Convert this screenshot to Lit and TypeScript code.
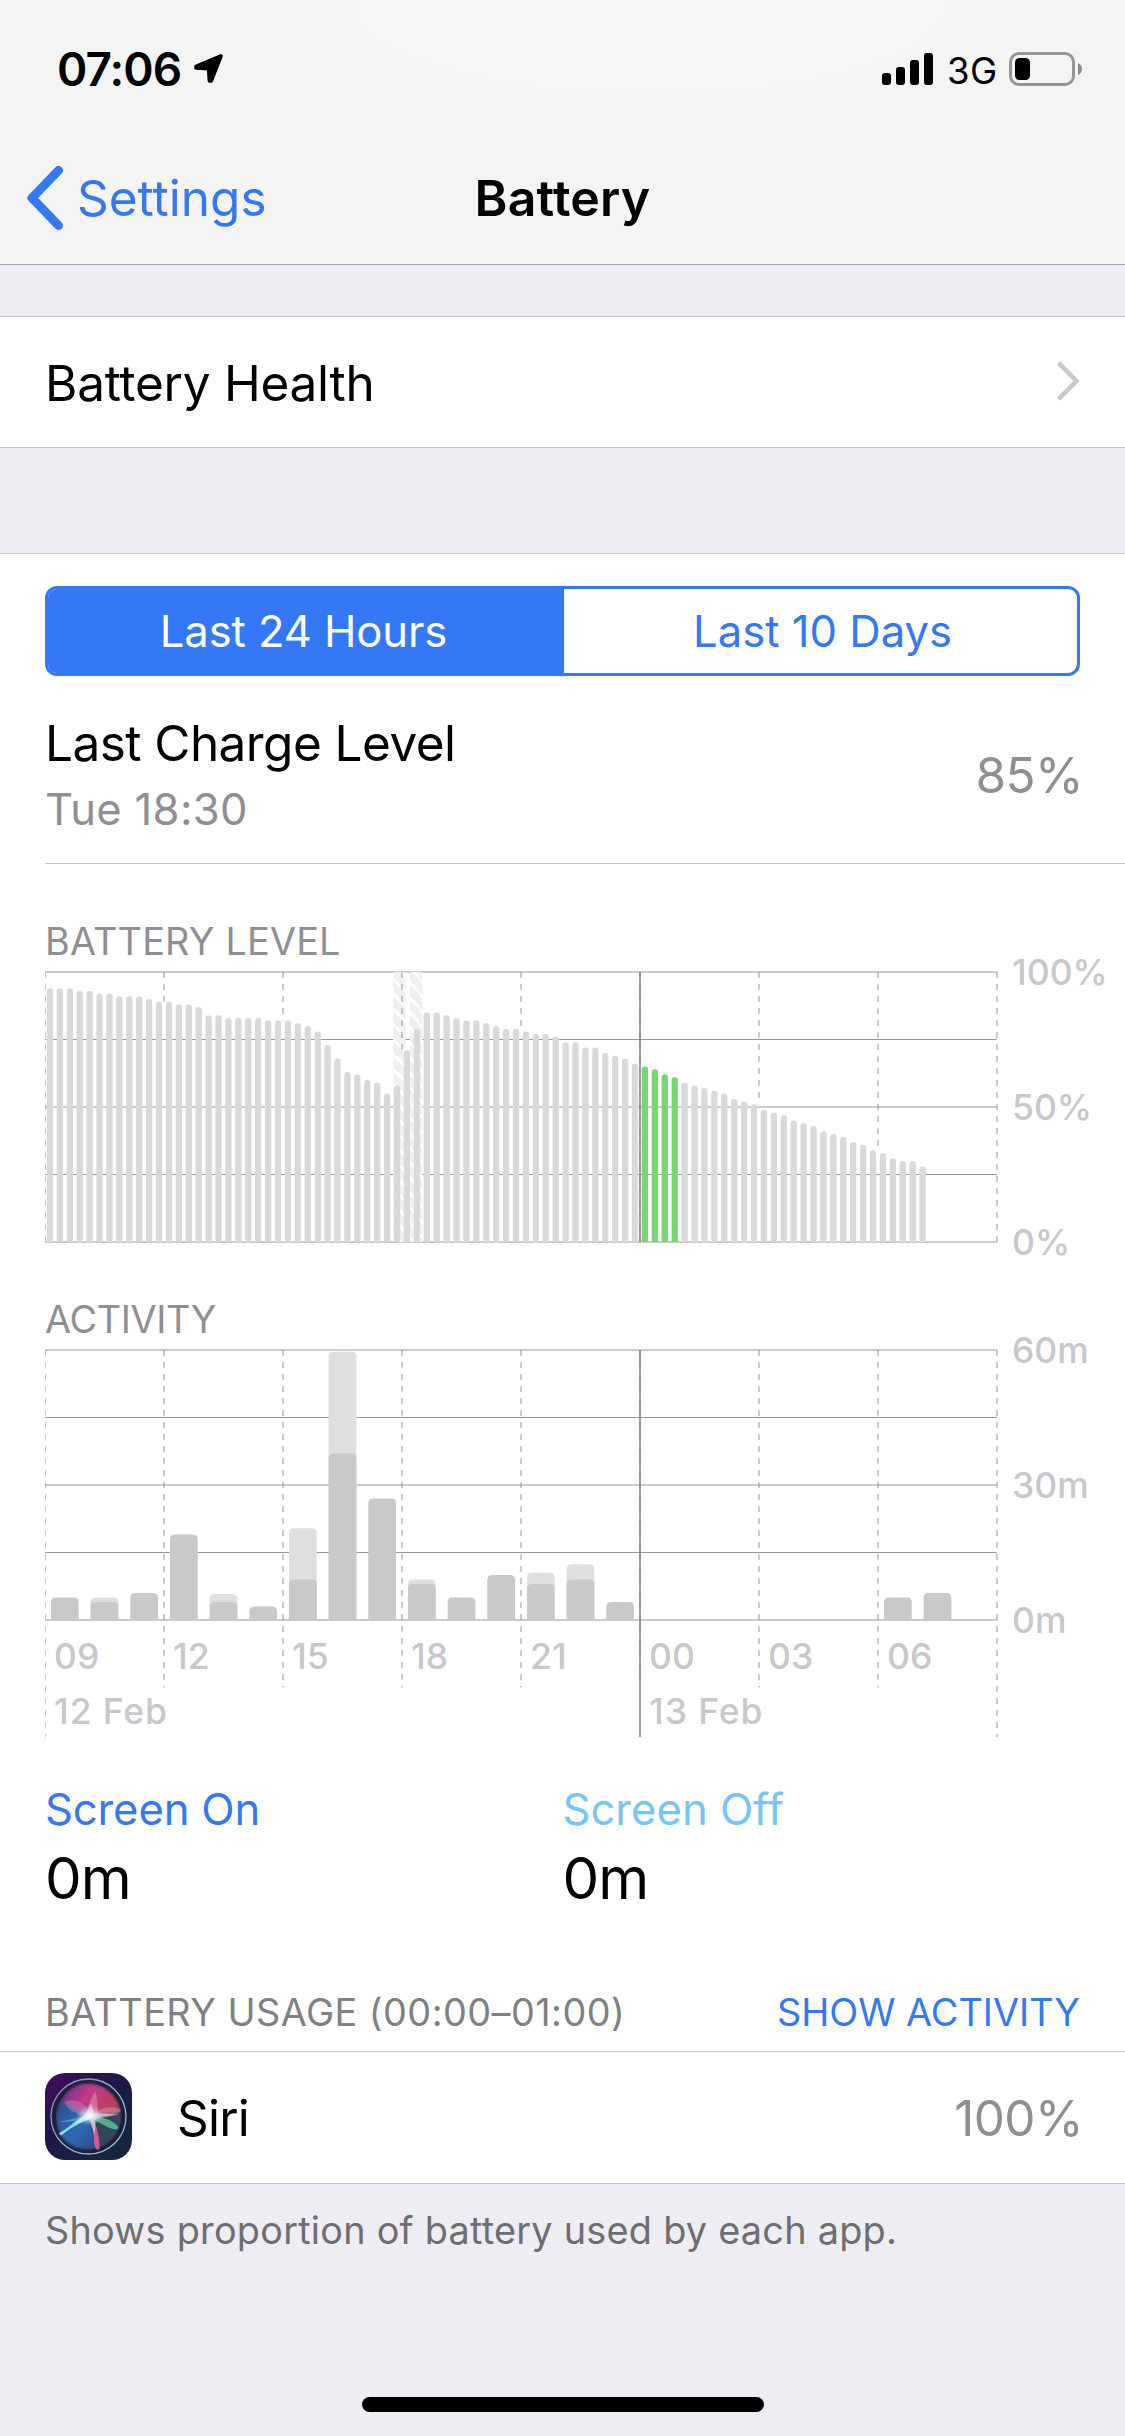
import { LitElement, html, css, svg } from "lit";
import { customElement } from "lit/decorators.js";

/** Battery percentage, one sample per quarter of an hour from 09:00. */
const LEVELS = [
  94, 94, 94, 93, 93, 92, 92, 91, 91, 91, 90, 89, 89, 88, 88, 87, 84, 84, 83, 83, 83, 83, 82, 82,
  82, 81, 80, 78, 73, 68, 63, 62, 60, 59, 55, 58, 71, 79, 85, 85, 84, 83, 82, 82, 81, 80, 79, 79,
  78, 77, 77, 76, 74, 74, 72, 72, 70, 69, 68, 66, 65, 64, 62, 61, 59, 58, 57, 56, 55, 53, 52, 51,
  49, 48, 47, 45, 44, 43, 41, 40, 39, 37, 36, 34, 33, 31, 30, 30, 28,
];

/** Minutes per hour from 09:00: [hour index, screen on, total]. */
const ACTIVITY: Array<[number, number, number]> = [
  [0, 5, 5], [1, 4, 5], [2, 6, 6], [3, 19, 19], [4, 4, 5.8], [5, 3, 3], [6, 9, 20.4],
  [7, 37, 59.6], [8, 27, 27], [9, 8, 9], [10, 5, 5], [11, 10, 10], [12, 8, 10.5],
  [13, 9, 12.4], [14, 4, 4], [21, 5, 5], [22, 6, 6],
];

const HOURS = ["09", "12", "15", "18", "21", "00", "03", "06"];
const WIDTH = 952;
const HEIGHT = 270;
const STEP = WIDTH / 8;
const QUARTER = WIDTH / 96;
const HOUR = WIDTH / 24;
const COLUMNS = [0, 1, 2, 3, 4, 5, 6, 7, 8];

const roundedTop = (x: number, h: number, w: number, r: number) => {
  const y = HEIGHT - h;
  return `M${x} ${HEIGHT}V${y + r}Q${x} ${y} ${x + r} ${y}H${x + w - r}Q${x + w} ${y} ${x + w} ${y + r}V${HEIGHT}Z`;
};

const horizontalLines = () => [0, 1, 2, 3, 4].map((i) =>
  i % 2
    ? svg`<rect x="0" y=${i * 67.5 - 0.5} width=${WIDTH} height="1" fill="#969696"></rect>`
    : svg`<rect x="0" y=${i * 67.5 - 1} width=${WIDTH} height="2" fill="#cbcbcb"></rect>`);

const dash = (i: number, length: number) => svg`
  <line x1=${i === 0 ? 0.5 : i * STEP} x2=${i === 0 ? 0.5 : i * STEP} y1="0" y2=${length}
    stroke="#808080" stroke-opacity=".42" stroke-width=${i === 0 ? 1 : 2} stroke-dasharray="6 6"></line>`;

@customElement("battery-level-chart")
export class BatteryLevelChart extends LitElement {
  static styles = css`
    :host { display: block; }
    svg { display: block; overflow: visible; }
  `;

  private dashLength(i: number) {
    if (i === 0 || i === 5 || i === 8) return HEIGHT;
    return HEIGHT - Math.max(LEVELS[i * 12 - 1], LEVELS[i * 12]) * 2.7;
  }

  render() {
    return html`
      <svg width="952" height="270" viewBox="0 0 952 270">
        <defs>
          <pattern id="hatch" width="13" height="15" patternUnits="userSpaceOnUse" x="348.3" y="0">
            <rect width="13" height="15" fill="#f0f0f0"></rect>
            <path d="M-2 -9.7L15 7.3M-2 5.3L15 22.3" stroke="#fff" stroke-width="2.6"></path>
          </pattern>
        </defs>
        ${horizontalLines()}
        <rect x="348.3" y="0" width="12.4" height="270" fill="url(#hatch)"></rect>
        <rect x="364.7" y="0" width="12.6" height="270" fill="url(#hatch)"></rect>
        <rect x="356" y="110" width="10" height="160" fill="url(#hatch)"></rect>
        ${COLUMNS.map((i) => dash(i, this.dashLength(i)))}
        <rect x="594" y="0" width="2" height="270" fill="#808080" fill-opacity=".75"></rect>
        ${LEVELS.map((v, i) => svg`
          <path d=${roundedTop(i * QUARTER + 1.8, v * 2.7, 6.3, 3)}
            fill=${i >= 60 && i < 64 ? "#76d672" : "#d9d9d9"}></path>`)}
      </svg>`;
  }
}

@customElement("activity-chart")
export class ActivityChart extends LitElement {
  static styles = css`
    :host { display: block; height: 270px; }
    svg { display: block; overflow: visible; }
  `;

  render() {
    return html`
      <svg width="952" height="387" viewBox="0 0 952 387">
        ${horizontalLines()}
        ${ACTIVITY.map(([hour, on, total]) => svg`
          ${total > on
            ? svg`<path d=${roundedTop(hour * HOUR + 5.95, total * 4.5, 27.77, 5)} fill="#dfdfdf"></path>`
            : null}
          <path d=${roundedTop(hour * HOUR + 5.95, on * 4.5, 27.77, 5)} fill="#c9c9c9"></path>`)}
        ${COLUMNS.map((i) => dash(i, i === 0 || i === 8 ? 387 : 337.5))}
        <rect x="594" y="0" width="2" height="387" fill="#808080" fill-opacity=".75"></rect>
      </svg>`;
  }
}

@customElement("siri-icon")
export class SiriIcon extends LitElement {
  static styles = css`
    :host { display: block; width: 87px; height: 87px; }
    svg { display: block; border-radius: 20px; }
  `;

  render() {
    return html`
      <svg width="87" height="87" viewBox="0 0 260 260">
        <defs>
          <linearGradient id="back" x1="0" y1="0" x2=".8" y2="1">
            <stop offset="0" stop-color="#430c5f"></stop>
            <stop offset=".5" stop-color="#1d1846"></stop>
            <stop offset="1" stop-color="#15273f"></stop>
          </linearGradient>
          <linearGradient id="ring" x1="0" y1="0" x2="1" y2="1">
            <stop offset="0" stop-color="#a06bc4"></stop>
            <stop offset=".5" stop-color="#8fb5c4"></stop>
            <stop offset="1" stop-color="#7fc9bd"></stop>
          </linearGradient>
          <linearGradient id="pink" x1="0" y1=".2" x2="1" y2=".6">
            <stop offset="0" stop-color="#6a3390"></stop>
            <stop offset=".4" stop-color="#c03a86"></stop>
            <stop offset="1" stop-color="#b94152"></stop>
          </linearGradient>
          <linearGradient id="blue" x1="0" y1="0" x2=".8" y2="1">
            <stop offset="0" stop-color="#2c4f8c"></stop>
            <stop offset=".6" stop-color="#2c6cb6"></stop>
            <stop offset="1" stop-color="#2d4f90"></stop>
          </linearGradient>
          <radialGradient id="glow">
            <stop offset="0" stop-color="#fff"></stop>
            <stop offset=".3" stop-color="#e8f4ff" stop-opacity=".75"></stop>
            <stop offset="1" stop-color="#b9d8ff" stop-opacity="0"></stop>
          </radialGradient>
          <filter id="soft" x="-20%" y="-20%" width="140%" height="140%">
            <feGaussianBlur stdDeviation="5"></feGaussianBlur>
          </filter>
        </defs>
        <rect width="260" height="260" fill="url(#back)"></rect>
        <circle cx="130" cy="130" r="112" fill="#1d1f3d"></circle>
        <circle cx="130" cy="130" r="97" fill="#3a3d5c"></circle>
        <g filter="url(#soft)">
          <path d="M130 130L52 92C60 52 92 33 130 33C178 33 216 70 225 116Z" fill="url(#pink)"></path>
          <path d="M130 130L50 85C30 130 34 175 62 205C92 230 130 232 155 222Z" fill="url(#blue)"></path>
          <path d="M140 134L226 124C226 160 208 195 165 220Z" fill="#2f4a54"></path>
        </g>
        <path d="M128 136C100 122 70 118 58 86C84 74 122 84 138 124Z" fill="#b79ad8" opacity=".35"></path>
        <path d="M134 128C110 122 66 150 34 142C60 150 90 144 128 140Z" fill="#63c8e8" opacity=".55"></path>
        <path d="M124 122C130 92 142 68 150 54C158 76 158 104 156 130Z" fill="#f4a0cc" opacity=".45"></path>
        <path d="M136 132C160 100 212 96 226 110C228 124 190 126 136 132Z" fill="#d3a3b0" opacity=".45"></path>
        <path d="M144 130C172 128 222 150 219 165C208 176 172 156 144 137Z" fill="#5cc79f" opacity=".8"></path>
        <path d="M142 134C156 160 164 198 163 226C158 234 150 228 147 212C146 184 144 160 136 138Z" fill="#dd5f9c" opacity=".9"></path>
        <path d="M130 120L146 134C108 146 80 162 48 187L41 181C68 162 96 144 130 120Z" fill="#93ecec" opacity=".9"></path>
        <path d="M138 92L147 120L222 124L152 137L148 184L132 140L78 154L122 122Z" fill="#fff" opacity=".5"></path>
        <ellipse cx="134" cy="127" rx="42" ry="30" fill="url(#glow)"></ellipse>
        <circle cx="130" cy="130" r="112" fill="none" stroke="url(#ring)" stroke-width="4"></circle>
      </svg>`;
  }
}

@customElement("app-root")
export class AppRoot extends LitElement {
  static styles = css`
    :host {
      display: block;
      width: 1125px;
      height: 2436px;
      overflow: hidden;
      background: #eeedf3;
      color: #000;
      font-family: Inter, "Liberation Sans", sans-serif;
      white-space: nowrap;
    }
    * { box-sizing: border-box; }
    svg { display: block; flex: none; }
    .header {
      height: 265px;
      border-bottom: 1px solid #a7a7ab;
      background: radial-gradient(ellipse 420px 130px at 650px 0, #f8f8f8, #f4f4f4);
    }
    .status {
      height: 136px;
      display: flex;
      align-items: center;
      justify-content: space-between;
      padding: 1px 42px 0 57px;
    }
    .status-side { display: flex; align-items: center; }
    .clock { font-size: 46px; font-weight: 600; letter-spacing: -0.9px; width: 136px; }
    .network { font-size: 36.5px; letter-spacing: 0.5px; width: 62px; padding: 4px 0 0 0; }
    .signal { margin-right: 13px; }
    .nav {
      height: 128px;
      display: grid;
      grid-template-columns: 1fr auto 1fr;
      align-items: center;
      padding: 0 26px 4px;
      font-size: 49.5px;
    }
    .back { display: flex; align-items: center; gap: 13px; color: #3478f6; letter-spacing: 0; }
    .title { font-size: 50px; font-weight: 600; letter-spacing: 0.2px; }
    .health {
      margin-top: 51px;
      height: 132px;
      border: solid #c8c7cc;
      border-width: 1px 0;
      background: #fff;
      display: flex;
      align-items: center;
      justify-content: space-between;
      padding: 0 45px;
      font-size: 49.5px;
      letter-spacing: -0.25px;
    }
    .health-label { padding-top: 2px; }
    .chevron { margin-bottom: 3px; }
    .panel {
      margin-top: 105px;
      border: solid #c8c7cc;
      border-width: 1px 0;
      background: #fff;
      height: 1631px;
      padding-top: 32px;
    }
    .segments {
      margin: 0 45px;
      height: 90px;
      display: grid;
      grid-template-columns: 516px 1fr;
      border: 3px solid #3478f6;
      border-radius: 12px;
      color: #3478f6;
      font-size: 43.6px;
      overflow: hidden;
    }
    .segment { display: flex; align-items: center; justify-content: center; padding-left: 4px; }
    .segment-active { background: #3478f6; color: #fff; padding: 0 5px 0 0; letter-spacing: -0.1px; }
    .charge {
      margin-left: 45px;
      height: 188px;
      padding: 34px 42px 0 0;
      border-bottom: 1px solid #c8c7cc;
      display: flex;
      justify-content: space-between;
      font-size: 49.5px;
    }
    .charge-title { line-height: 66px; letter-spacing: -0.55px; }
    .charge-time { font-size: 43.6px; line-height: 68px; letter-spacing: 0.3px; color: #8e8e93; }
    .percent { color: #8e8e93; letter-spacing: -0.6px; }
    .charge-percent { line-height: 131px; }
    .caption { margin-left: 45px; font-size: 37.8px; line-height: 50px; color: #8e8e93; }
    .caption-level { margin-top: 52px; letter-spacing: 0.2px; }
    .caption-activity { margin-top: 52px; letter-spacing: -0.35px; }
    .plot { margin: 6px 0 0 45px; display: flex; gap: 15px; height: 270px; }
    .scale {
      display: flex;
      flex-direction: column;
      justify-content: space-between;
      margin: -19px 0 -21px;
      font-size: 35.5px;
      line-height: 40px;
      font-weight: 500;
      color: #c7c7cc;
    }
    .hours {
      margin: 17px 0 0 45px;
      width: 952px;
      display: grid;
      grid-template-columns: repeat(8, 1fr);
    }
    .dates {
      margin: 15px 0 0 45px;
      width: 952px;
      display: grid;
      grid-template-columns: 595px 1fr;
      letter-spacing: 0.9px;
    }
    .tick { padding-left: 9px; font-size: 35.5px; line-height: 40px; font-weight: 500; color: #c7c7cc; }
    .totals { margin: 50px 45px 0; display: grid; grid-template-columns: 1fr 1fr; }
    .total-label { font-size: 43.6px; line-height: 56px; }
    .total-on { color: #3478f6; letter-spacing: -0.15px; }
    .total-off { color: #74c6f7; }
    .total-value { font-size: 58.2px; line-height: 80px; letter-spacing: -1px; }
    .usage {
      margin-top: 69px;
      padding: 0 45px;
      height: 64px;
      display: flex;
      justify-content: space-between;
      font-size: 37.8px;
      line-height: 50px;
      color: #808084;
    }
    .usage-title { letter-spacing: 0.45px; }
    .link { color: #3478f6; }
    .app {
      height: 132px;
      border-top: 1px solid #c8c7cc;
      display: flex;
      align-items: center;
      padding: 0 42px 0 45px;
      font-size: 49.5px;
    }
    .app-icon { margin-bottom: 2px; }
    .app-name { margin-left: 45px; flex: 1; letter-spacing: -0.8px; }
    .note {
      margin: 21px 45px 0;
      font-size: 37.8px;
      line-height: 50px;
      letter-spacing: 0.26px;
      color: #6d6d72;
    }
    .home { margin: 142px auto 0; width: 402px; height: 15px; border-radius: 8px; background: #000; }
  `;

  render() {
    return html`
      <div class="header">
        <div class="status">
          <div class="status-side">
            <span class="clock">07:06</span>
            <svg width="31" height="31" viewBox="0 0 31 31">
              <path d="M28 3L3 13.3L3 15L15.6 15.6L16.4 28L18.2 28Z" stroke="#000" stroke-width="3.6" stroke-linejoin="round"></path>
            </svg>
          </div>
          <div class="status-side">
            <svg class="signal" width="52" height="34" viewBox="0 0 52 34">
              <rect x="0" y="21" width="9" height="12" rx="3"></rect>
              <rect x="14" y="15" width="9" height="18" rx="3"></rect>
              <rect x="28" y="8" width="9" height="25" rx="3"></rect>
              <rect x="42" y="1" width="9" height="32" rx="3"></rect>
            </svg>
            <span class="network">3G</span>
            <svg width="74" height="34" viewBox="0 0 74 34">
              <rect x="1.5" y="1.5" width="63" height="31" rx="8.5" fill="none" stroke="#969696" stroke-width="3"></rect>
              <rect x="6" y="6" width="15" height="22" rx="4.5"></rect>
              <path d="M69 11Q73 13 73 17Q73 21 69 23Z" fill="#8c8c8c"></path>
            </svg>
          </div>
        </div>
        <div class="nav">
          <div class="back">
            <svg width="38" height="64" viewBox="0 0 38 64">
              <path d="M32.5 4.5L6 32L32.5 59.5" fill="none" stroke="#3478f6" stroke-width="9" stroke-linecap="round" stroke-linejoin="round"></path>
            </svg>
            <span>Settings</span>
          </div>
          <div class="title">Battery</div>
          <div></div>
        </div>
      </div>

      <div class="health">
        <span class="health-label">Battery Health</span>
        <svg class="chevron" width="24" height="40" viewBox="0 0 24 40">
          <path d="M2.5 1.8L20.5 20L2.5 38.2" fill="none" stroke="#c7c7cc" stroke-width="4.6"></path>
        </svg>
      </div>

      <div class="panel">
        <div class="segments">
          <div class="segment segment-active">Last 24 Hours</div>
          <div class="segment">Last 10 Days</div>
        </div>
        <div class="charge">
          <div>
            <div class="charge-title">Last Charge Level</div>
            <div class="charge-time">Tue 18:30</div>
          </div>
          <div class="percent charge-percent">85%</div>
        </div>

        <div class="caption caption-level">BATTERY LEVEL</div>
        <div class="plot">
          <battery-level-chart></battery-level-chart>
          <div class="scale"><span>100%</span><span>50%</span><span>0%</span></div>
        </div>

        <div class="caption caption-activity">ACTIVITY</div>
        <div class="plot">
          <activity-chart></activity-chart>
          <div class="scale"><span>60m</span><span>30m</span><span>0m</span></div>
        </div>
        <div class="hours">${HOURS.map((h) => html`<span class="tick">${h}</span>`)}</div>
        <div class="dates"><span class="tick">12 Feb</span><span class="tick">13 Feb</span></div>

        <div class="totals">
          <div>
            <div class="total-label total-on">Screen On</div>
            <div class="total-value">0m</div>
          </div>
          <div>
            <div class="total-label total-off">Screen Off</div>
            <div class="total-value">0m</div>
          </div>
        </div>

        <div class="usage">
          <span class="usage-title">BATTERY USAGE (00:00–01:00)</span>
          <span class="link">SHOW ACTIVITY</span>
        </div>
        <div class="app">
          <siri-icon class="app-icon"></siri-icon>
          <span class="app-name">Siri</span>
          <span class="percent">100%</span>
        </div>
      </div>
      <div class="note">Shows proportion of battery used by each app.</div>
      <div class="home"></div>
    `;
  }
}
